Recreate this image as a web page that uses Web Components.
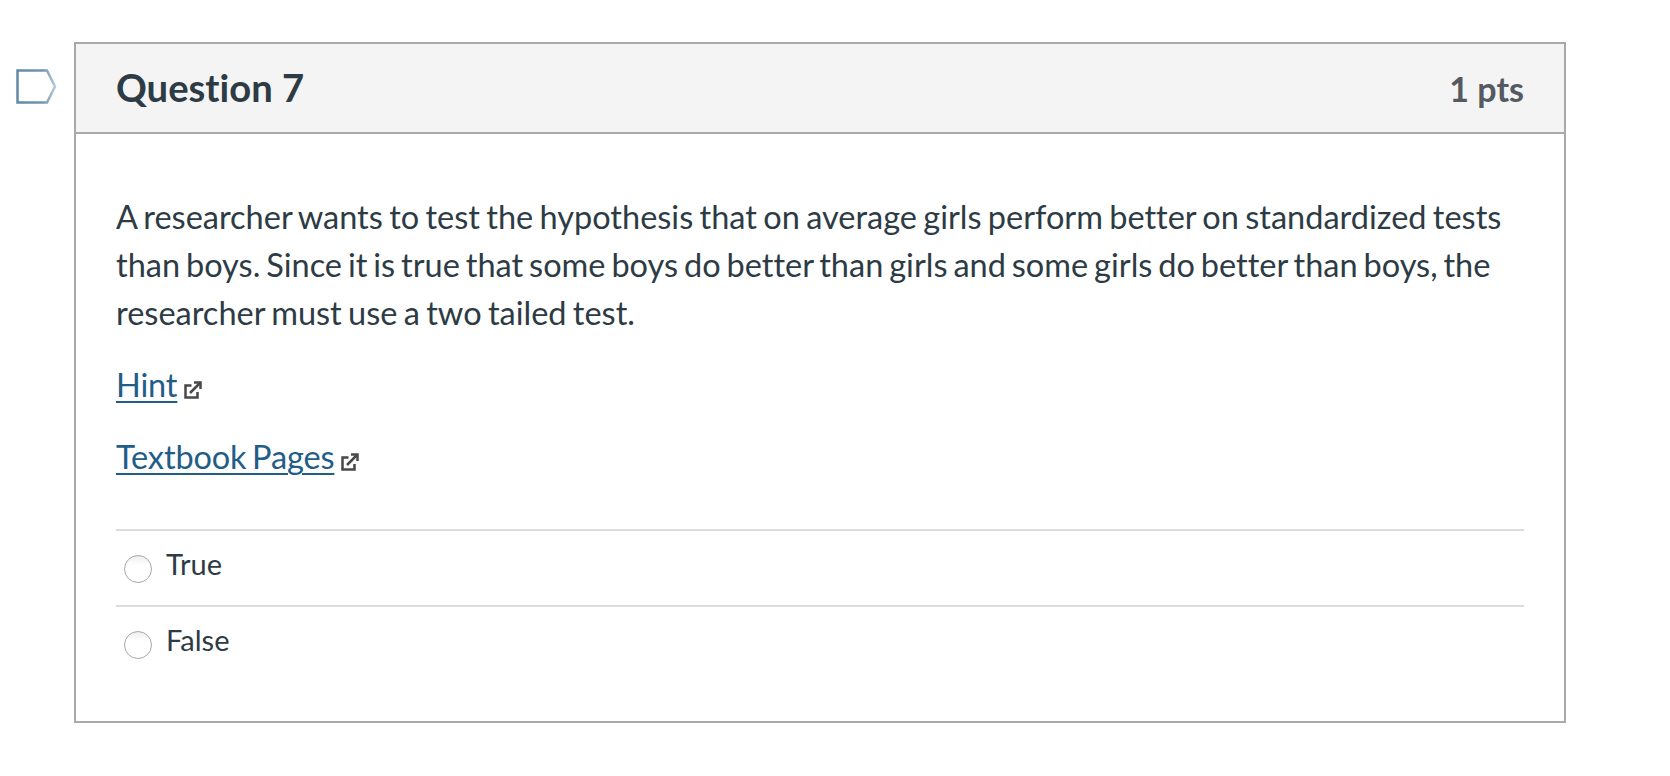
<!DOCTYPE html>
<html lang="en">
  <head>
    <meta charset="UTF-8" />
    <title>Question 7</title>
    <style>
      html, body { margin: 0; background: #fff; }
      body { font-family: Lato, sans-serif; color: #2d3b45; font-variant-ligatures: none; }
    </style>
  </head>
  <body>
    <template id="quiz-question">
      <style>
        :host {
          display: flex;
          align-items: flex-start;
          gap: 17px;
          padding: 42px 0 0 16px;
        }
        .flag { flex: none; margin-top: 27px; width: 41px; height: 35px; }
        .card {
          width: 1492px;
          box-sizing: border-box;
          border: 2px solid #a9a9a9;
        }
        header {
          display: flex;
          justify-content: space-between;
          align-items: center;
          box-sizing: border-box;
          height: 90px;
          padding: 0 40px;
          background: #f4f4f4;
          border-bottom: 2px solid #a9a9a9;
        }
        h2 { margin: 0 0 2px; font-size: 38.2px; font-weight: 700; color: #2d3b45; }
        .pts { font-size: 34px; font-weight: 700; color: #545a5f; }
        .body { padding: 59px 40px 0; }
        .answers { margin-top: 48px; padding-bottom: 40px; }
      </style>
      <svg class="flag" viewBox="0 0 41 35" fill="#fff" stroke="url(#flag-edge)" stroke-width="2.5">
        <defs>
          <linearGradient id="flag-edge" x1="0" x2="1" y1="0" y2="0">
            <stop offset="0" stop-color="#6189a8" />
            <stop offset="0.7" stop-color="#7497b1" />
            <stop offset="1" stop-color="#b4cad9" />
          </linearGradient>
        </defs>
        <path d="M1.5 1.5H31L39 17.5L31 33.5H1.5Z" />
      </svg>
      <section class="card">
        <header>
          <h2><slot name="title"></slot></h2>
          <span class="pts"><slot name="points"></slot></span>
        </header>
        <div class="body">
          <slot></slot>
          <div class="answers"><slot name="answers"></slot></div>
        </div>
      </section>
    </template>

    <template id="quiz-link">
      <style>
        :host { display: block; margin: 0 0 24px; font-size: 32.5px; line-height: 48px; letter-spacing: -0.15px; word-spacing: -2.5px; }
        a { color: #225d88; text-decoration: underline; text-decoration-thickness: 2px; text-underline-offset: 4px; }
        svg { width: 20px; height: 20px; margin-left: 6px; vertical-align: -3px; }
      </style>
      <a href="#"><slot></slot></a><svg viewBox="0 0 20 20" fill="none" stroke="#484848" stroke-width="2.5">
        <path d="M8.5 5.5H2.5V17.5H14.5V12" />
        <path d="M7 13L16.5 3.5" />
        <path d="M11 2.5H17.5V9" />
      </svg>
    </template>

    <template id="quiz-answer">
      <style>
        :host {
          display: flex;
          align-items: center;
          box-sizing: border-box;
          height: 76px;
          border-top: 2px solid #dcdcdc;
          padding-left: 8px;
          font-size: 29px;
        }
        .radio {
          width: 28px;
          height: 28px;
          box-sizing: border-box;
          border-radius: 50%;
          border: 1.5px solid #a8a8a8;
          background: linear-gradient(#efefef, #fff 35%);
          margin: 2px 14px 0 0;
        }
        span { margin-top: -10px; }
      </style>
      <div class="radio"></div><span><slot></slot></span>
    </template>

    <template id="quiz-text">
      <style>
        :host { display: block; margin: 0 0 24px; font-size: 32.5px; line-height: 48px; word-spacing: -2px; }
      </style>
      <slot></slot>
    </template>

    <quiz-question>
      <span slot="title">Question 7</span>
      <span slot="points">1 pts</span>
      <quiz-text>A researcher wants to test the hypothesis that on average girls perform better on standardized tests <span style="word-spacing: -2.4px">than boys. Since it is true that some boys do better than girls and some girls do better than boys, the</span> researcher must use a two tailed test.</quiz-text>
      <quiz-link>Hint</quiz-link>
      <quiz-link>Textbook Pages</quiz-link>
      <quiz-answer slot="answers">True</quiz-answer>
      <quiz-answer slot="answers">False</quiz-answer>
    </quiz-question>

    <script>
      for (const name of ['quiz-question', 'quiz-link', 'quiz-answer', 'quiz-text']) {
        const template = document.getElementById(name);
        customElements.define(
          name,
          class extends HTMLElement {
            constructor() {
              super();
              this.attachShadow({ mode: 'open' });
              this.shadowRoot.appendChild(template.content.cloneNode(true));
            }
          }
        );
      }
    </script>
  </body>
</html>
